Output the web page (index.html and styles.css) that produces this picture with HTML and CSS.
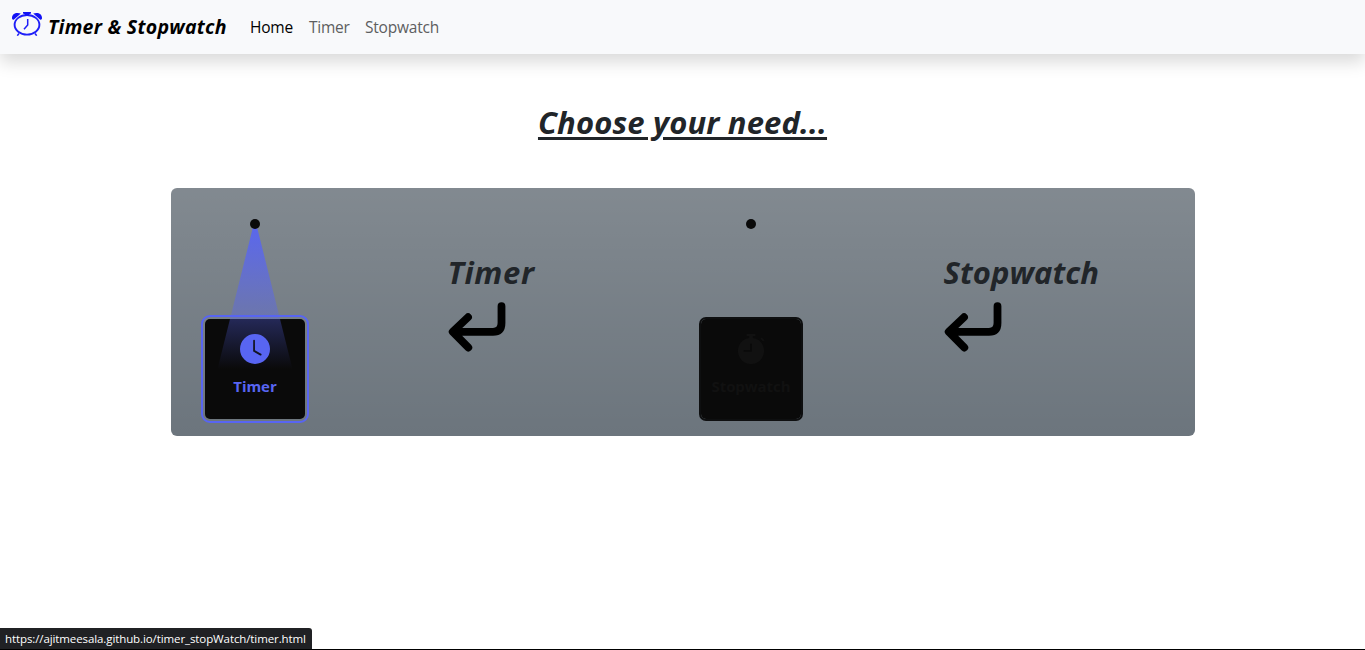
FILE: index.html
```html
<!DOCTYPE html>
<html lang="en">
<head>
<meta charset="utf-8">
<title>Timer &amp; Stopwatch</title>
<link rel="stylesheet" href="styles.css">
</head>
<body>
<nav class="navbar">
  <a class="brand">
    <svg class="logo" width="30" height="24" viewBox="0 0 30 24" fill="none" stroke="#1f1ff8">
      <ellipse cx="15" cy="12.8" rx="12.4" ry="9.8" stroke-width="1.9"/>
      <path d="M0 6C0 2 4 0 8.8 1.6L2 7.4C1 8 0 7.5 0 6ZM30 6C30 2 26 0 21.2 1.6L28 7.4C29 8 30 7.5 30 6ZM11 0H19V1.5L17 2.2V3.5H13V2.2L11 1.5Z" fill="#1212f5" stroke="none"/>
      <path d="M15.7 7V13L12 17.2M7 21.5L5.3 23.7M23 21.5L24.7 23.7" stroke-width="1.5"/>
    </svg>
    <span class="brand-name">Timer &amp; Stopwatch</span>
  </a>
  <a class="link active home">Home</a>
  <a class="link timer">Timer</a>
  <a class="link stopwatch">Stopwatch</a>
</nav>
<main>
  <h1 class="title"><span>Choose your need...</span></h1>
  <section class="panel">
    <div class="cell">
      <div class="lamp"><i class="bulb"></i><i class="beam"></i></div>
      <a class="card lit">
        <svg width="30" height="30" viewBox="0 0 16 16" fill="currentColor"><path d="M16 8A8 8 0 1 1 0 8a8 8 0 0 1 16 0zM8 3.5a.5.5 0 0 0-1 0V9a.5.5 0 0 0 .252.434l3.5 2a.5.5 0 0 0 .496-.868L8 8.71V3.5z"/></svg>
        <span class="card-name">Timer</span>
      </a>
    </div>
    <div class="cell info">
      <h2 class="name short">Timer</h2>
      <svg class="arrow" width="59" height="50" viewBox="0 0 59 50" fill="none" stroke="#000" stroke-width="7.8" stroke-linecap="round" stroke-linejoin="round"><path d="M53.5 4.2V21Q53.5 29.8 45 29.8H5M20 15.2L4.7 29.8L20.3 45.5"/></svg>
    </div>
    <div class="cell">
      <div class="lamp"><i class="bulb"></i></div>
      <a class="card">
        <svg width="30" height="30" viewBox="0 0 16 16" fill="currentColor"><path d="M5.5.5A.5.5 0 0 1 6 0h4a.5.5 0 0 1 0 1H9v1.07A7.001 7.001 0 1 1 7 2.07V1H6a.5.5 0 0 1-.5-.5zM8.5 5.6a.5.5 0 1 0-1 0v2.9h-3a.5.5 0 0 0 0 1H8a.5.5 0 0 0 .5-.5V5.6zM13 2.5l.7-.7 1.5 1.5-.7.7z"/></svg>
        <span class="card-name">Stopwatch</span>
      </a>
    </div>
    <div class="cell info">
      <h2 class="name long">Stopwatch</h2>
      <svg class="arrow" width="59" height="50" viewBox="0 0 59 50" fill="none" stroke="#000" stroke-width="7.8" stroke-linecap="round" stroke-linejoin="round"><path d="M53.5 4.2V21Q53.5 29.8 45 29.8H5M20 15.2L4.7 29.8L20.3 45.5"/></svg>
    </div>
  </section>
</main>
<div class="status"><span>https://ajitmeesala.github.io/timer_stopWatch/timer.html</span></div>
</body>
</html>
```
FILE: styles.css
```css
* { box-sizing: border-box; }
body {
  margin: 0;
  height: 650px;
  overflow: hidden;
  display: flex;
  flex-direction: column;
  background: #fff;
  color: #212529;
  font-family: "Open Sans", "Noto Sans", sans-serif;
}
.navbar {
  height: 54px;
  flex: none;
  display: flex;
  align-items: center;
  padding-left: 12px;
  background: #f8f9fb;
  box-shadow: 0 8px 16px rgba(0, 0, 0, .15);
}
.brand { display: flex; align-items: center; gap: 6px; width: 238px; color: #000; }
.logo { margin-bottom: 6px; }
.brand-name { font: italic 700 19.5px/30px "Open Sans", sans-serif; letter-spacing: .26px; white-space: nowrap; }
.link { font-size: 15.5px; line-height: 24px; margin-bottom: 1px; color: #5d5e5f; white-space: nowrap; }
.link.active { color: #000; }
.home { width: 59px; letter-spacing: -.2px; }
.timer { width: 56px; letter-spacing: -.25px; }
.stopwatch { letter-spacing: -.2px; }
main { flex: 1; }
.title {
  margin: 47px 0 0;
  height: 87px;
  text-align: center;
  font: italic 700 31px/42px "Open Sans", sans-serif;
}
.title span { text-decoration: underline 3px; text-underline-offset: 3px; letter-spacing: .15px; }
.panel {
  width: 1024px;
  height: 248px;
  margin-left: 171px;
  padding: 0 16px;
  display: grid;
  grid-template-columns: repeat(4, 248px);
  border-radius: 6px;
  background: linear-gradient(180deg, rgba(255, 255, 255, .15), rgba(255, 255, 255, 0)) #6c757d;
}
.cell { padding: 31px 0 0 18px; }
.info { padding: 63px 0 0 13px; }
.lamp { position: relative; width: 100px; height: 100px; }
.bulb, .beam { position: absolute; left: 50%; top: 0; transform: translateX(-50%); }
.bulb { z-index: 2; width: 10px; height: 10px; border-radius: 50%; background: #0a0a0a; }
.beam {
  z-index: 1;
  width: 75px;
  height: 150px;
  clip-path: polygon(50% 0, 100% 100%, 0 100%);
  background: linear-gradient(#5865f2, rgba(88, 101, 242, 0));
}
.card {
  width: 100px;
  height: 100px;
  display: flex;
  flex-direction: column;
  align-items: center;
  padding-top: 15px;
  border-radius: 5px;
  background: #0a0a0a;
  color: #111;
  outline: 2px solid #0e0f10;
}
.card svg { position: relative; z-index: 2; }
.lit { color: #5865f2; outline-color: #5865f2; outline-offset: 2px; }
.card-name { margin-top: 10px; font-size: 15px; line-height: 24px; font-weight: 700; letter-spacing: -.05px; }
.name { margin: 0 0 0 -.5px; font: italic 700 31px/42px "Open Sans", sans-serif; }
.short { letter-spacing: .6px; }
.long { letter-spacing: .05px; }
.arrow { display: block; margin-top: 9px; }
.status {
  height: 22px;
  flex: none;
  border-bottom: 1px solid #000;
}
.status span {
  display: block;
  width: 312px;
  height: 21px;
  padding-left: 5px;
  border-radius: 0 3px 0 0;
  background: #202124;
  color: #fff;
  font-size: 11.5px;
  line-height: 21px;
  letter-spacing: -.1px;
  white-space: nowrap;
}
```
